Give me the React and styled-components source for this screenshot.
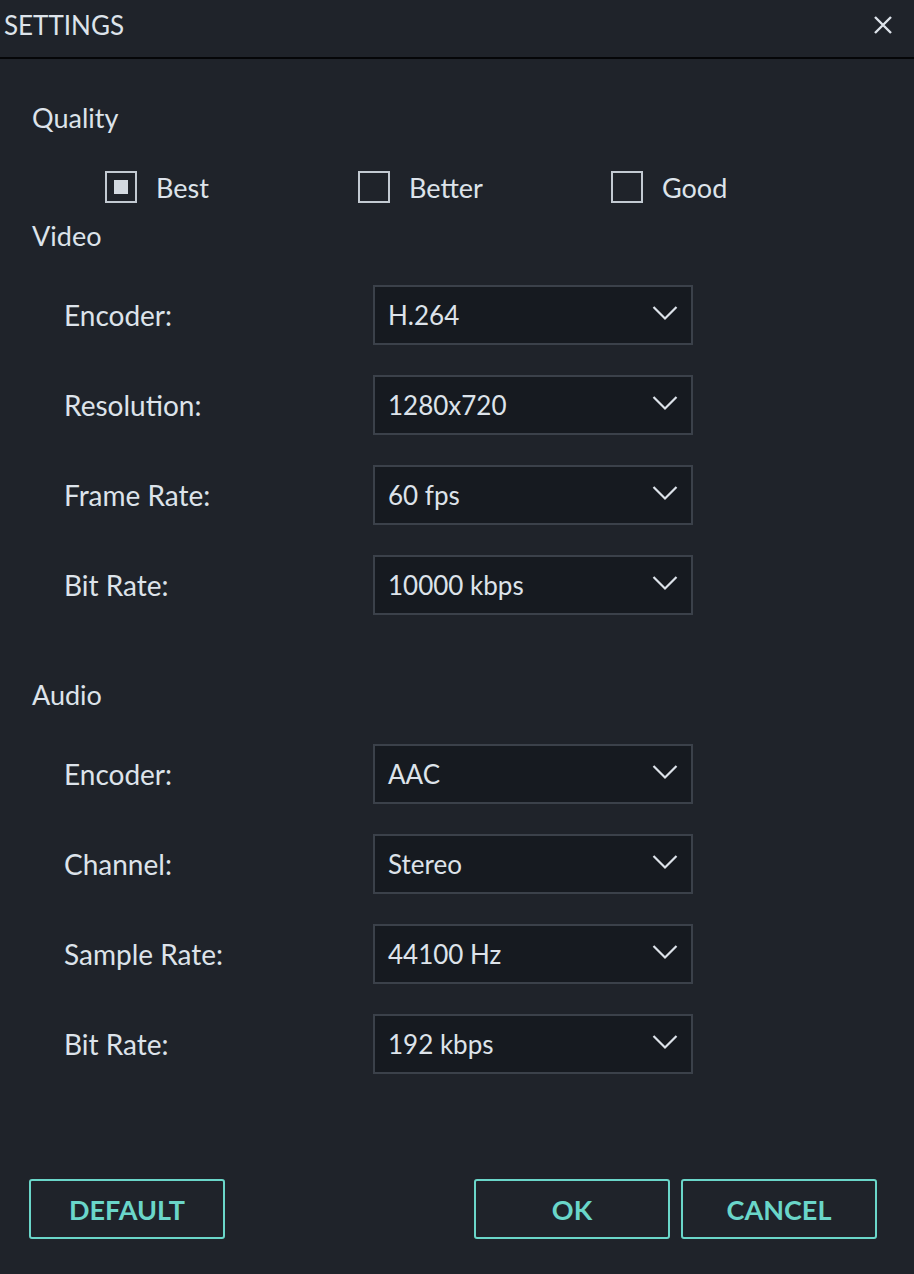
import React, { useState } from "react";
import styled, { createGlobalStyle } from "styled-components";

const GlobalStyle = createGlobalStyle`
  html, body {
    margin: 0;
    padding: 0;
    background: #1f232a;
  }
  body {
    font-family: Lato, "Open Sans", "Liberation Sans", sans-serif;
    color: #dde3ea;
  }
`;

const videoRows = [
  { label: "Encoder:", value: "H.264" },
  { label: "Resolution:", value: "1280x720" },
  { label: "Frame Rate:", value: "60 fps" },
  { label: "Bit Rate:", value: "10000 kbps" },
];

const audioRows = [
  { label: "Encoder:", value: "AAC" },
  { label: "Channel:", value: "Stereo" },
  { label: "Sample Rate:", value: "44100 Hz" },
  { label: "Bit Rate:", value: "192 kbps" },
];

const CloseIcon = () => (
  <svg width="20" height="20" viewBox="0 0 20 20">
    <path d="M2 2 L18 18 M18 2 L2 18" stroke="#dde3ea" strokeWidth="2.4" fill="none" />
  </svg>
);

const Chevron = () => (
  <svg width="26" height="16" viewBox="0 0 26 16">
    <path d="M1.5 2 L13 13.5 L24.5 2" stroke="#dde3ea" strokeWidth="2.2" fill="none" />
  </svg>
);

const Settings = () => {
  const [quality, setQuality] = useState("Best");

  return (
    <Dialog>
      <Header>
        <h1>SETTINGS</h1>
        <CloseButton>
          <CloseIcon />
        </CloseButton>
      </Header>

      <Body>
        <SectionTitle $top={39}>Quality</SectionTitle>
        <QualityRow>
          {["Best", "Better", "Good"].map((q) => (
            <Option key={q} onClick={() => setQuality(q)}>
              <Box $checked={quality === q} />
              <span>{q}</span>
            </Option>
          ))}
        </QualityRow>

        <SectionTitle $top={13}>Video</SectionTitle>
        <Rows>
          {videoRows.map((r) => (
            <Row key={r.label}>
              <Label>{r.label}</Label>
              <Select>
                <span>{r.value}</span>
                <Chevron />
              </Select>
            </Row>
          ))}
        </Rows>

        <SectionTitle $top={60}>Audio</SectionTitle>
        <Rows>
          {audioRows.map((r) => (
            <Row key={r.label}>
              <Label>{r.label}</Label>
              <Select>
                <span>{r.value}</span>
                <Chevron />
              </Select>
            </Row>
          ))}
        </Rows>
      </Body>

      <Footer>
        <Button>DEFAULT</Button>
        <ButtonGroup>
          <Button>OK</Button>
          <Button>CANCEL</Button>
        </ButtonGroup>
      </Footer>
    </Dialog>
  );
};

const Dialog = styled.div`
  width: 914px;
  height: 1274px;
  background: #1f232a;
  display: flex;
  flex-direction: column;
  overflow: hidden;
`;

const Header = styled.div`
  height: 59px;
  flex-shrink: 0;
  box-sizing: border-box;
  border-bottom: 2px solid #050608;
  display: flex;
  align-items: center;
  justify-content: space-between;
  padding: 0 21px 8px 4px;
  h1 {
    margin: 0;
    font-size: 26px;
    font-weight: 400;
    color: #dde3ea;
  }
`;

const CloseButton = styled.div`
  width: 20px;
  height: 20px;
  display: flex;
  cursor: pointer;
`;

const Body = styled.div`
  padding: 0 32px;
  display: flex;
  flex-direction: column;
`;

const SectionTitle = styled.div`
  margin-top: ${(p) => p.$top}px;
  height: 40px;
  line-height: 40px;
  font-size: 27px;
  color: #dde3ea;
`;

const QualityRow = styled.div`
  margin-top: 33px;
  padding-left: 73px;
  display: flex;
`;

const Option = styled.div`
  width: 253px;
  display: flex;
  align-items: center;
  gap: 19px;
  font-size: 27px;
  height: 32px;
  cursor: pointer;
`;

const Box = styled.div`
  width: 32px;
  height: 32px;
  box-sizing: border-box;
  border: 2px solid #c3cad2;
  display: flex;
  align-items: center;
  justify-content: center;
  &::after {
    content: "";
    width: 14px;
    height: 14px;
    background: #d4dae1;
    display: ${(p) => (p.$checked ? "block" : "none")};
  }
`;

const Rows = styled.div`
  margin-top: 29px;
  display: flex;
  flex-direction: column;
  gap: 30px;
`;

const Row = styled.div`
  display: flex;
  align-items: center;
  padding-left: 32px;
`;

const Label = styled.div`
  width: 309px;
  font-size: 28px;
  color: #dde3ea;
`;

const Select = styled.div`
  width: 320px;
  height: 60px;
  box-sizing: border-box;
  background: #161a20;
  border: 2px solid #3b414a;
  display: flex;
  align-items: center;
  justify-content: space-between;
  padding: 0 13px 0 13px;
  font-size: 26px;
  color: #dde3ea;
  svg {
    margin-top: -5px;
  }
`;

const Footer = styled.div`
  margin-top: auto;
  margin-bottom: 35px;
  padding: 0 37px 0 29px;
  display: flex;
  justify-content: space-between;
`;

const ButtonGroup = styled.div`
  display: flex;
  gap: 11px;
`;

const Button = styled.button`
  width: 196px;
  height: 60px;
  box-sizing: border-box;
  background: transparent;
  border: 2px solid #6ad6c9;
  border-radius: 3px;
  color: #6ad6c9;
  font-family: Lato, "Open Sans", "Liberation Sans", sans-serif;
  font-size: 27px;
  font-weight: 700;
  cursor: pointer;
`;

export default function App() {
  return (
    <>
      <GlobalStyle />
      <Settings />
    </>
  );
}
